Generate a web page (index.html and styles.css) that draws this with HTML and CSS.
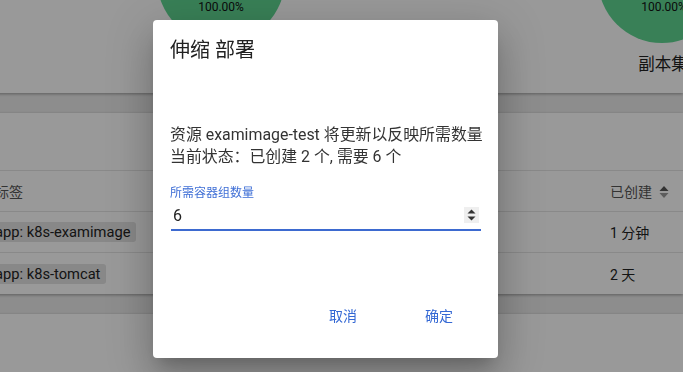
FILE: index.html
```html
<!DOCTYPE html>
<html lang="zh-CN">
<head>
  <meta charset="UTF-8">
  <meta name="viewport" content="width=device-width, initial-scale=1.0">
  <title>伸缩 部署</title>
  <link rel="stylesheet" href="styles.css">
</head>
<body>
  <div class="page">
    <section class="card charts">
      <div class="chart chart-first">
        <div class="pie"><span>100.00%</span></div>
      </div>
      <div class="chart chart-last">
        <div class="pie"><span>100.00%</span></div>
        <div class="chart-label">副本集</div>
      </div>
    </section>

    <section class="card list">
      <div class="list-head"></div>
      <div class="row row-head">
        <div class="cell">标签</div>
        <div class="cell">已创建
          <svg class="sort" width="10" height="12" viewBox="0 0 10 12"><path d="M5 0L9.5 5H0.5z" fill="#555"/><path d="M5 12L9.5 7H0.5z" fill="#999"/></svg>
        </div>
      </div>
      <div class="row">
        <div class="cell"><span class="chip">app: k8s-examimage</span></div>
        <div class="cell">1 分钟</div>
      </div>
      <div class="row">
        <div class="cell"><span class="chip">app: k8s-tomcat</span></div>
        <div class="cell">2 天</div>
      </div>
    </section>

    <section class="card rest"></section>
  </div>

  <div class="backdrop"></div>

  <div class="dialog">
    <h2 class="dialog-title">伸缩 部署</h2>
    <p class="dialog-text">资源 examimage-test 将更新以反映所需数量<br>当前状态：已创建 2 个, 需要 6 个</p>
    <label class="field">
      <span class="field-label">所需容器组数量</span>
      <span class="field-input">
        <input type="text" value="6">
        <span class="spin">
          <svg width="9" height="12" viewBox="0 0 9 12"><path d="M4.5 0.5L8.5 4.5H0.5z" fill="#333"/><path d="M4.5 11.5L8.5 7.5H0.5z" fill="#333"/></svg>
        </span>
      </span>
    </label>
    <div class="dialog-actions">
      <button class="btn">取消</button>
      <button class="btn">确定</button>
    </div>
  </div>
</body>
</html>
```

FILE: styles.css
```css
body {
  margin: 0;
  font-family: Roboto, "Noto Sans CJK SC", sans-serif;
  background-color: #ececec;
  color: #222;
  overflow: hidden;
}
.page {
  margin: -90px 0 0 -24px;
}
.card {
  background: #fff;
  box-shadow: 0 1px 3px rgba(0,0,0,0.35);
  margin-bottom: 20px;
}

/* charts */
.charts {
  display: flex;
  height: 183px;
  padding-top: 5px;
  box-sizing: border-box;
}
.chart {
  width: 128px;
  display: flex;
  flex-direction: column;
  align-items: center;
}
.chart-first {
  margin-left: 181px;
}
.chart-last {
  margin-left: 313px;
}
.pie {
  width: 128px;
  height: 128px;
  border-radius: 50%;
  background: #5fd592;
  display: flex;
  align-items: flex-end;
  justify-content: center;
  padding-bottom: 29px;
  box-sizing: border-box;
  font-size: 12px;
  line-height: 14px;
  color: #111;
}
.chart-last .pie span {
  margin-left: 4px;
}
.chart-label {
  margin: 12px 0 0 0;
  padding-left: 2px;
  font-size: 16.5px;
  line-height: 20px;
  white-space: nowrap;
}

/* list */
.list-head {
  height: 57px;
  border-bottom: 1px solid #e4e4e4;
}
.row {
  display: grid;
  grid-template-columns: 1fr 73px;
  height: 41px;
  align-items: center;
  padding-left: 19px;
  font-size: 14px;
  border-bottom: 1px solid #e4e4e4;
  box-sizing: border-box;
}
.row:last-child {
  border-bottom: none;
}
.row-head {
  color: #555;
}
.sort {
  vertical-align: -1px;
  margin-left: 4px;
}
.chip {
  display: inline-block;
  background: #e3e3e3;
  border-radius: 3px;
  padding: 0 6px;
  margin-left: -6px;
  line-height: 20px;
  font-size: 14.7px;
}
.rest {
  height: 80px;
}

/* dialog */
.backdrop {
  position: fixed;
  inset: 0;
  background: rgba(0,0,0,0.4);
}
.dialog {
  position: fixed;
  left: 153px;
  top: 20px;
  width: 345px;
  height: 338px;
  box-sizing: border-box;
  padding: 16px 17px 0;
  background: #fff;
  border-radius: 4px;
  box-shadow: 0 11px 15px -7px rgba(0,0,0,0.2), 0 24px 38px 3px rgba(0,0,0,0.14), 0 9px 46px 8px rgba(0,0,0,0.12);
}
.dialog-title {
  margin: 0;
  font-size: 20px;
  line-height: 28px;
  font-weight: 400;
  color: #222;
}
.dialog-text {
  margin: 60px 0 0;
  font-size: 15.9px;
  line-height: 22px;
  color: #333;
  white-space: nowrap;
}
.field {
  display: block;
  margin-top: 17px;
}
.field-label {
  display: block;
  font-size: 12px;
  line-height: 16px;
  color: #3f6fd6;
}
.field-input {
  display: flex;
  align-items: center;
  height: 28px;
  border-bottom: 2px solid #3d6ad0;
  margin-left: 1px;
}
.field-input input {
  flex: 1;
  border: none;
  outline: none;
  padding: 0 0 0 2px;
  font: 16px Roboto, "Noto Sans CJK SC", sans-serif;
  color: #222;
  background: transparent;
}
.spin {
  width: 15px;
  height: 16px;
  background: #efefef;
  display: flex;
  align-items: center;
  justify-content: center;
  margin-right: 2px;
}
.dialog-actions {
  display: flex;
  justify-content: flex-end;
  gap: 32px;
  margin-top: 66px;
  padding-right: 10px;
}
.btn {
  min-width: 64px;
  height: 36px;
  border: none;
  background: transparent;
  font: 14px Roboto, "Noto Sans CJK SC", sans-serif;
  color: #3468d4;
  padding: 0 8px;
}
```
